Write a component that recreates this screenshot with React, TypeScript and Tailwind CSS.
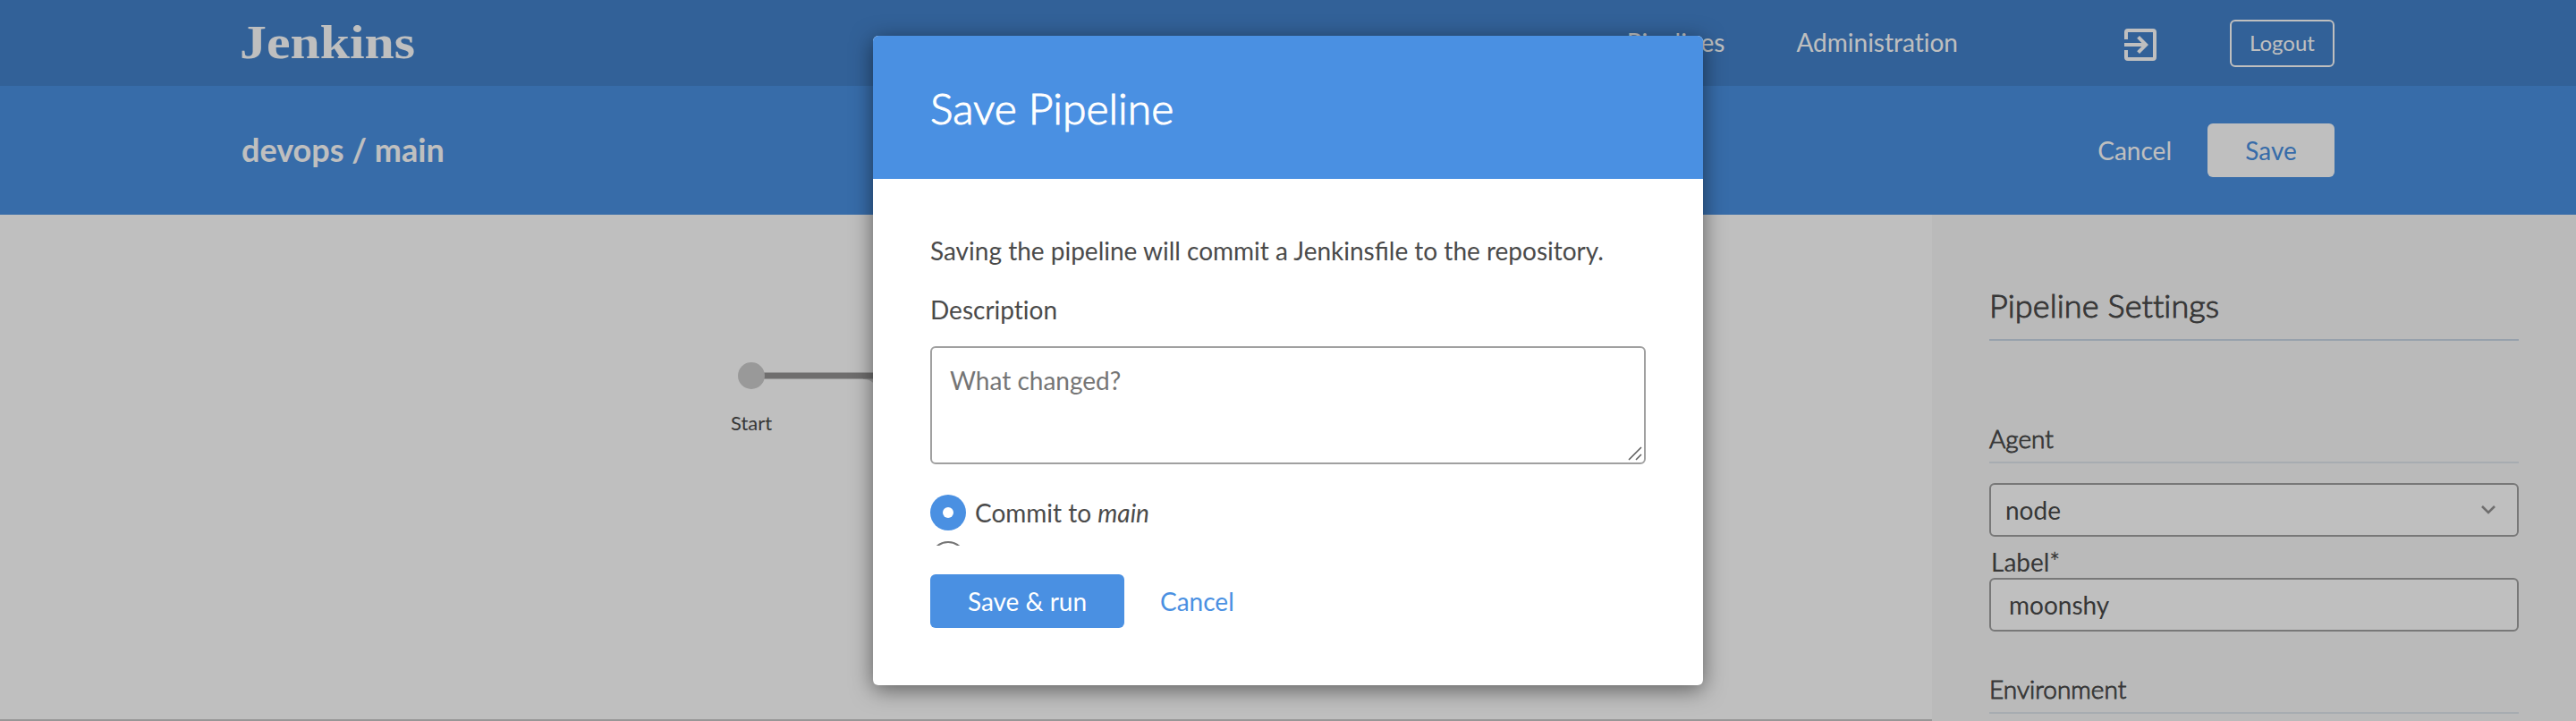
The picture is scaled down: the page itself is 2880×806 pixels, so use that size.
import React from 'react';

function ExitIcon() {
  return (
    <svg viewBox="0 0 24 24" className="size-12 fill-white">
      <path d="M10.09 15.59L11.5 17l5-5-5-5-1.41 1.41L12.67 11H3v2h9.67l-2.58 2.59zM19 3H5a2 2 0 0 0-2 2v4h2V5h14v14H5v-4H3v4a2 2 0 0 0 2 2h14a2 2 0 0 0 2-2V5a2 2 0 0 0-2-2z" />
    </svg>
  );
}

function Header() {
  return (
    <header className="flex h-24 items-center bg-[#4382cb] px-[270px] text-[28px] text-white">
      <span className="-ml-0.5 h-[62px] origin-left scale-x-[1.15] font-['Liberation_Serif',serif] text-[52px] leading-[61px] font-bold">
        Jenkins
      </span>
      <nav className="ml-auto flex items-center">
        <a className="mr-[80px] -mt-0.5">Pipelines</a>
        <a className="mr-[180px] -mt-0.5">Administration</a>
        <span className="mt-1 mr-[76px]">
          <ExitIcon />
        </span>
        <button className="mt-px flex h-[53px] w-[117px] items-center justify-center rounded-md border-2 border-white pb-0.5 text-2xl">
          Logout
        </button>
      </nav>
    </header>
  );
}

function Toolbar() {
  return (
    <div className="flex h-36 items-center bg-[#4a90e2] px-[270px] text-[28px] text-white">
      <h1 className="-mt-0.5 text-4xl font-bold">devops / main</h1>
      <button className="mr-10 ml-auto">Cancel</button>
      <button className="h-[60px] w-[142px] rounded-md bg-white text-[#4a90e2]">Save</button>
    </div>
  );
}

function Canvas() {
  return (
    <main className="relative w-[2160px] border-b-2 border-[#cacaca] bg-white">
      <svg className="absolute top-[150px] left-[820px]" width="200" height="80" viewBox="0 0 200 80">
        <path d="M145 30.5q20 0 20 24v20" fill="none" stroke="#d4d4d4" strokeWidth="7" />
        <path d="M20 30H200" stroke="#949393" strokeWidth="7" />
        <circle cx="20" cy="30" r="15" fill="#cdcdcd" />
      </svg>
      <span className="absolute top-[219px] left-[817px] text-[22px] leading-[28px] text-[#4a4a4a]">Start</span>
    </main>
  );
}

function Sidebar() {
  return (
    <aside className="flex w-[720px] flex-col bg-[#f8f8f8] px-16 text-[28px] text-[#4a4a4a]">
      <h2 className="mt-[79px] h-[62px] border-b-2 border-[#cad7e6] text-4xl leading-[44px] font-light tracking-[0.1px] [-webkit-text-stroke:1px_#4a4a4a]">
        Pipeline Settings
      </h2>
      <h3 className="mt-[92px] h-[45px] border-b-2 border-[#dfe6ec] leading-[34px] font-light [-webkit-text-stroke:0.9px_#4a4a4a]">
        Agent
      </h3>
      <div className="mt-[22px] flex h-[60px] items-center justify-between rounded-md border-2 border-[#a0a0a0] bg-white pr-[24px] pl-4">
        node
        <svg width="16" height="10" viewBox="0 0 16 10" fill="none" stroke="#949393" strokeWidth="2.6">
          <path d="M1 1l7 7 7-7" />
        </svg>
      </div>
      <label className="mt-[11px] h-[35px] pl-0.5 leading-[34px]">Label*</label>
      <div className="flex h-[60px] items-center rounded-md border-2 border-[#a0a0a0] bg-white pl-5">moonshy</div>
      <h3 className="mt-[47px] h-[45px] border-b-2 border-[#dfe6ec] leading-[34px] font-light [-webkit-text-stroke:0.9px_#4a4a4a]">
        Environment
      </h3>
    </aside>
  );
}

function SaveDialog() {
  return (
    <section className="flex h-[726px] w-[928px] flex-col overflow-hidden rounded-md bg-white text-[28px] leading-[34px] text-[#4a4a4a] shadow-[0_5px_24px_rgba(0,0,0,0.5)]">
      <h2 className="flex h-40 shrink-0 items-center bg-[#4a90e2] px-16 pt-0.5 text-5xl font-light text-white [-webkit-text-stroke:1.1px_white]">
        Save Pipeline
      </h2>
      <div className="h-[410px] overflow-hidden px-16 pt-16">
        <p className="-mt-px [font-variant-ligatures:common-ligatures]">
          Saving the pipeline will commit a Jenkinsfile to the repository.
        </p>
        <p className="mt-8">Description</p>
        <div className="relative mt-[24px] h-[132px] rounded-md border-2 border-[#a0a0a0] px-5 pt-[19px] text-[#757575]">
          What changed?
          <svg className="absolute right-0.5 bottom-0.5" width="16" height="16" viewBox="0 0 16 16" stroke="#5c5c5c" strokeWidth="1.5">
            <path d="M1 15L15 1M9 15l6-6" />
          </svg>
        </div>
        <div className="mt-[34px] flex h-10 items-center gap-2.5">
          <span className="flex size-10 items-center justify-center rounded-full bg-[#4a90e2]">
            <span className="size-3 rounded-full bg-white" />
          </span>
          <span>
            Commit to <em>main</em>
          </span>
        </div>
        <div className="mt-3 flex h-10 items-center">
          <span className="size-10 rounded-full border-2 border-[#757575]" />
        </div>
      </div>
      <div className="mt-8 flex items-center px-16">
        <button className="h-[60px] w-[217px] rounded-md bg-[#4a90e2] text-white">Save &amp; run</button>
        <button className="ml-10 text-[#4a90e2]">Cancel</button>
      </div>
    </section>
  );
}

export default function App() {
  return (
    <div className="relative flex h-[806px] w-[2880px] flex-col overflow-hidden font-[Lato,sans-serif] [font-variant-ligatures:none]">
      <Header />
      <Toolbar />
      <div className="flex flex-1 overflow-hidden">
        <Canvas />
        <Sidebar />
      </div>
      <div className="absolute inset-0 flex justify-center bg-black/25 pt-10">
        <SaveDialog />
      </div>
    </div>
  );
}
